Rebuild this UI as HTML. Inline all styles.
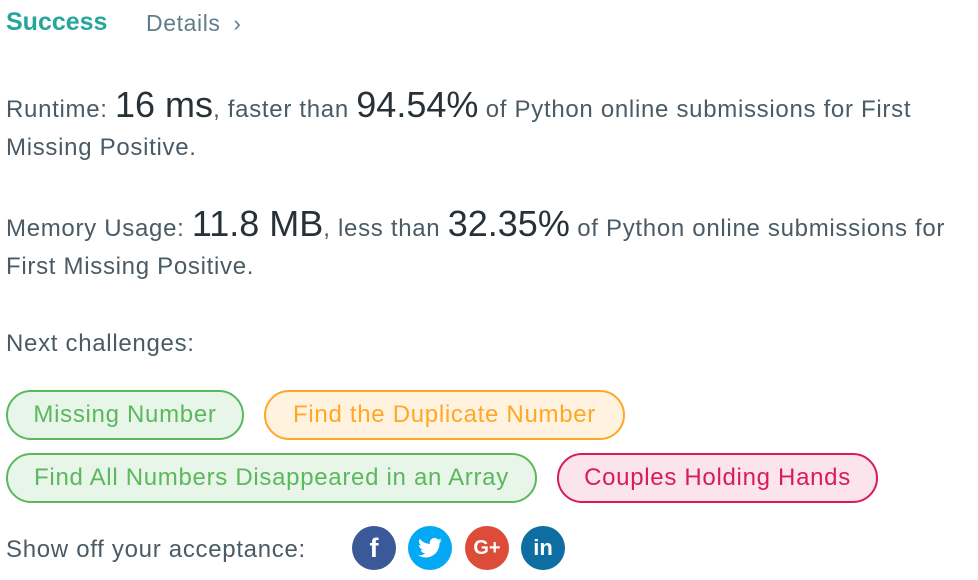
<!DOCTYPE html>
<html><head><meta charset="utf-8"><style>
body{margin:0;width:978px;height:580px;background:#fff;font-family:"Liberation Sans",sans-serif;color:#4a5b66;position:relative;overflow:hidden}
.a{position:absolute;white-space:nowrap}
.t{font-size:24px;letter-spacing:0.7px}
.big{font-size:36px;color:#263238;letter-spacing:0px}
.pill{position:absolute;height:46px;border:2px solid;border-radius:26px;font-size:24px;line-height:46px;box-sizing:content-box;text-align:center;letter-spacing:0.7px}
.g{border-color:#5cb85c;background:#e8f5e9;color:#5cb85c}
.o{border-color:#ffa726;background:#fff3e0;color:#ffa726}
.r{border-color:#d81b60;background:#fce4ec;color:#d81b60}
.c{position:absolute;top:526px;width:44px;height:44px;border-radius:50%;color:#fff;font-weight:bold;text-align:center;line-height:44px;font-size:24px}
</style></head><body>
<div class="a" style="left:6px;top:8px;font-size:25px;font-weight:bold;color:#26a69a">Success</div>
<div class="a" style="left:146px;top:10px;font-size:23px;color:#607d8b;letter-spacing:0.6px">Details <span style="margin-left:6px;font-size:22px">&#x203A;</span></div>
<div class="a t" style="left:6px;top:84px">Runtime: <span class="big">16 ms</span>, faster than <span class="big">94.54%</span> of Python online submissions for First</div>
<div class="a t" style="left:6px;top:134px">Missing Positive.</div>
<div class="a t" style="left:6px;top:203px">Memory Usage: <span class="big">11.8 MB</span>, less than <span class="big">32.35%</span> of Python online submissions for</div>
<div class="a t" style="left:6px;top:253px">First Missing Positive.</div>
<div class="a t" style="left:6px;top:330px">Next challenges:</div>
<div class="pill g" style="left:6px;top:390px;width:234px">Missing Number</div>
<div class="pill o" style="left:264px;top:390px;width:357px">Find the Duplicate Number</div>
<div class="pill g" style="left:6px;top:453px;width:527px">Find All Numbers Disappeared in an Array</div>
<div class="pill r" style="left:557px;top:453px;width:317px">Couples Holding Hands</div>
<div class="a t" style="left:6px;top:536px">Show off your acceptance:</div>
<div class="c" style="left:352px;background:#3b5998;font-size:27px">f</div>
<div class="c" style="left:408px;background:#03a9f4"><svg width="24" height="22" viewBox="0 0 24 20" style="margin-top:11px"><path fill="#fff" d="M24 2.4a10 10 0 0 1-2.8.8A5 5 0 0 0 23.300.4a10 10 0 0 1-3.1 1.2A4.9 4.9 0 0 0 11.8 6 14 14 0 0 1 1.7.9a4.9 4.9 0 0 0 1.5 6.6A4.9 4.9 0 0 1 1 6.9a4.9 4.9 0 0 0 3.9 4.9 5 5 0 0 1-2.2.1 4.9 4.9 0 0 0 4.6 3.4A9.9 9.9 0 0 1 0 17.3 14 14 0 0 0 7.5 19.5c9 0 14-7.5 14-14v-.6A10 10 0 0 0 24 2.4z"/></svg></div>
<div class="c" style="left:465px;background:#dd4b39;font-size:20px">G+</div>
<div class="c" style="left:521px;background:#0e6ea1;font-size:22px">in</div>
</body></html>
